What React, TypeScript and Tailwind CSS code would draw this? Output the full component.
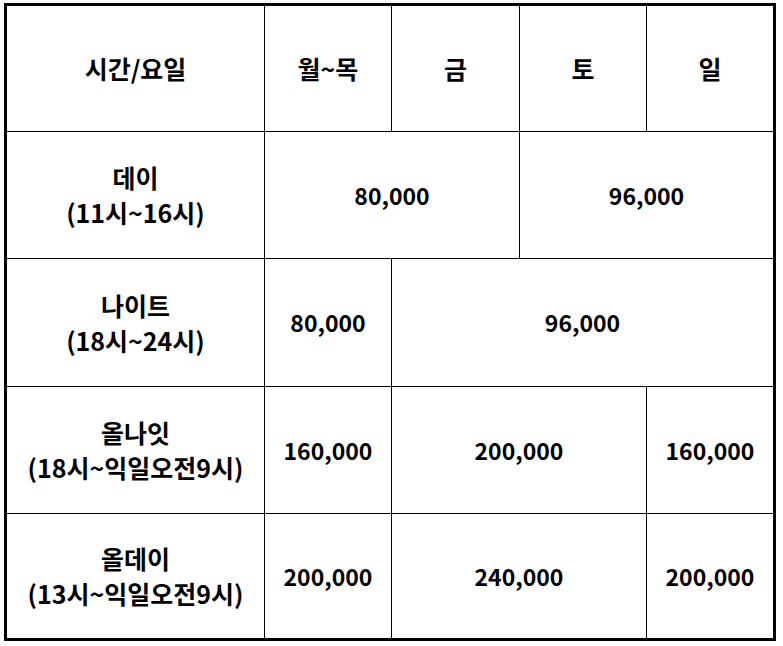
const cell = "bg-white flex flex-col items-center justify-center text-center";
const num = `${cell} text-[23px]`;
const kor = `${cell} text-[25px]`;

function Label({ top, sub }: { top: string; sub: string }) {
  return (
    <div className={kor}>
      <div>{top}</div>
      <div>{sub}</div>
    </div>
  );
}

export default function App() {
  return (
    <div className="min-h-screen bg-white pt-[3px] pl-[4px]">
      <div
        className="grid w-fit gap-px border-[3px] border-black bg-black font-bold leading-[35px] text-black grid-cols-[257px_126px_127px_126px_126px] grid-rows-[125px_126px_127px_126px_124px]"
        style={{ fontFamily: '"Noto Sans CJK KR", "Noto Sans", sans-serif' }}
      >
        <div className={kor}>시간/요일</div>
        <div className={kor}>월~목</div>
        <div className={kor}>금</div>
        <div className={kor}>토</div>
        <div className={kor}>일</div>

        <Label top="데이" sub="(11시~16시)" />
        <div className={`${num} col-span-2`}>80,000</div>
        <div className={`${num} col-span-2`}>96,000</div>

        <Label top="나이트" sub="(18시~24시)" />
        <div className={num}>80,000</div>
        <div className={`${num} col-span-3`}>96,000</div>

        <Label top="올나잇" sub="(18시~익일오전9시)" />
        <div className={num}>160,000</div>
        <div className={`${num} col-span-2`}>200,000</div>
        <div className={num}>160,000</div>

        <Label top="올데이" sub="(13시~익일오전9시)" />
        <div className={num}>200,000</div>
        <div className={`${num} col-span-2`}>240,000</div>
        <div className={num}>200,000</div>
      </div>
    </div>
  );
}
